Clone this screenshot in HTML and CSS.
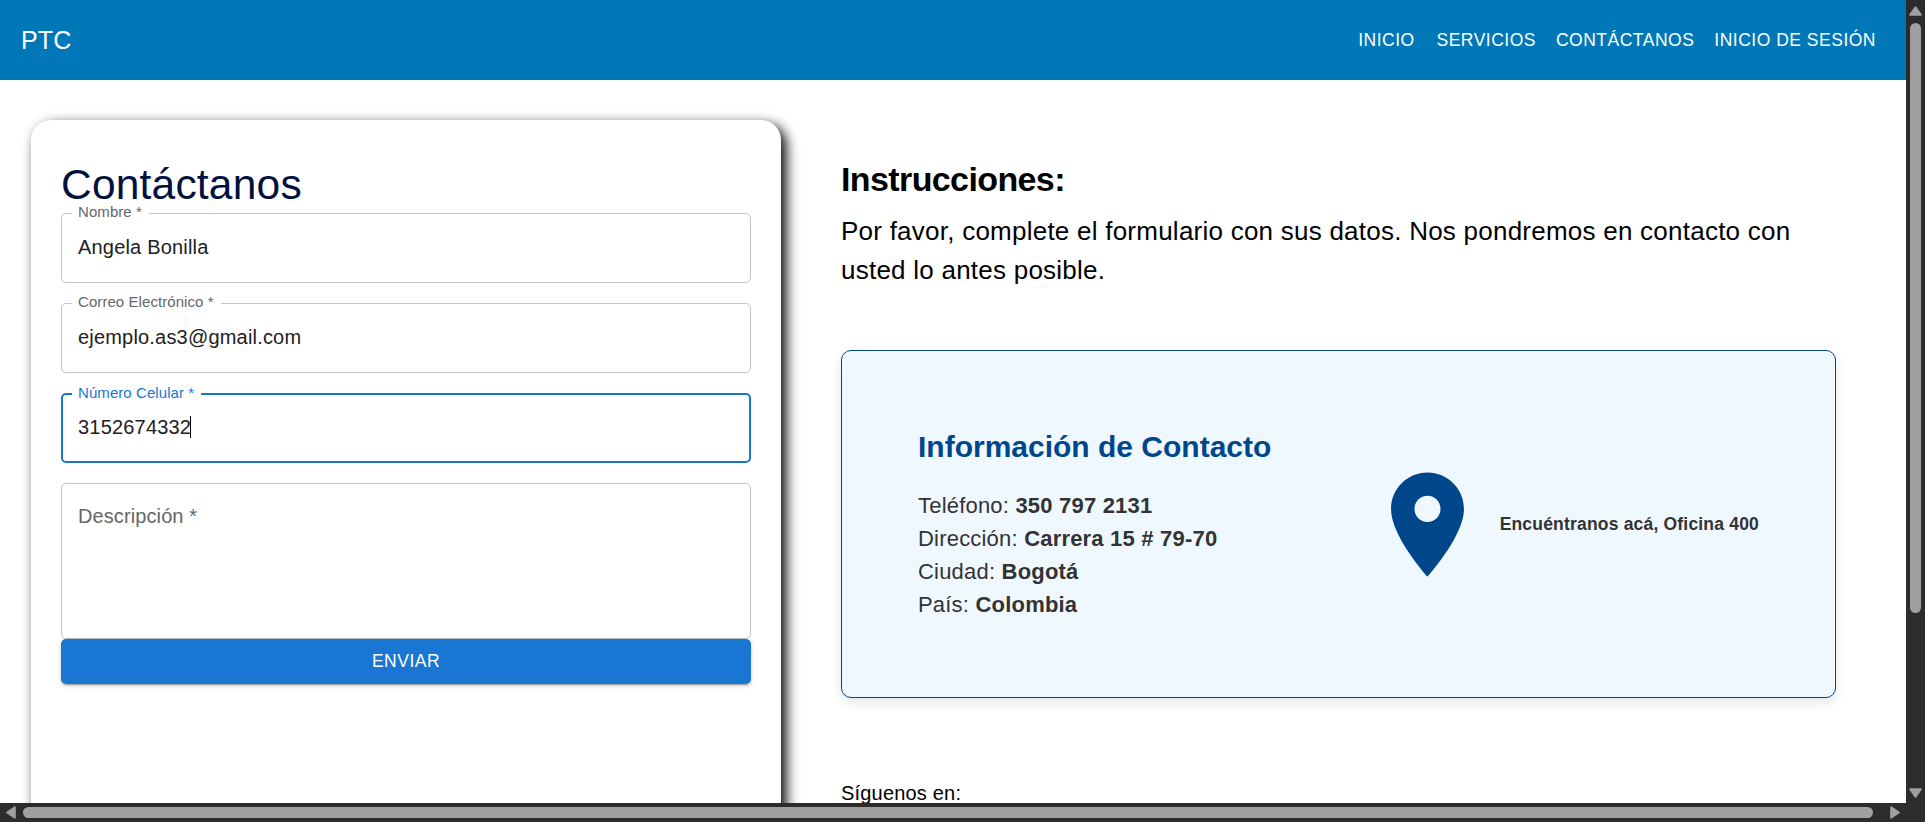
FILE: index.html
```html
<!DOCTYPE html>
<html lang="es">
<head>
<meta charset="utf-8">
<title>PTC - Contáctanos</title>
<link rel="stylesheet" href="styles.css">
</head>
<body>
<div class="window">
  <div class="viewport">
    <header class="appbar">
      <div class="brand">PTC</div>
      <nav class="nav">
        <a class="nav-link">INICIO</a>
        <a class="nav-link">SERVICIOS</a>
        <a class="nav-link">CONTÁCTANOS</a>
        <a class="nav-link">INICIO DE SESIÓN</a>
      </nav>
    </header>
    <main class="content">
      <section class="form-card">
        <h1 class="form-title">Contáctanos</h1>
        <div class="field"><span class="label">Nombre *</span><span class="value">Angela Bonilla</span></div>
        <div class="field"><span class="label">Correo Electrónico *</span><span class="value">ejemplo.as3@gmail.com</span></div>
        <div class="field focused"><span class="label">Número Celular *</span><span class="value">3152674332</span><span class="caret"></span></div>
        <div class="field area"><span class="placeholder">Descripción *</span></div>
        <button class="submit">ENVIAR</button>
      </section>
      <section class="info">
        <h2 class="info-title">Instrucciones:</h2>
        <p class="info-text">Por favor, complete el formulario con sus datos. Nos pondremos en contacto con<br>usted lo antes posible.</p>
        <div class="contact">
          <div class="contact-data">
            <h3 class="contact-title">Información de Contacto</h3>
            <div class="row">Teléfono: <b>350 797 2131</b></div>
            <div class="row">Dirección: <b>Carrera 15 # 79-70</b></div>
            <div class="row">Ciudad: <b>Bogotá</b></div>
            <div class="row">País: <b>Colombia</b></div>
          </div>
          <div class="place">
            <svg class="pin" viewBox="0 0 24 24"><path d="M12 2C8.13 2 5 5.13 5 9c0 5.25 7 13 7 13s7-7.75 7-13c0-3.87-3.13-7-7-7zm0 9.5c-1.38 0-2.5-1.12-2.5-2.5s1.12-2.5 2.5-2.5 2.5 1.12 2.5 2.5-1.12 2.5-2.5 2.5z"/></svg>
            <span class="place-text">Encuéntranos acá, Oficina 400</span>
          </div>
        </div>
        <p class="follow">Síguenos en:</p>
      </section>
    </main>
  </div>
  <div class="vbar">
    <svg class="arrow-v" viewBox="0 0 13 10"><path d="M6.5 1.2L11.8 8.8H1.2z"/></svg>
    <div class="vtrack"><div class="vthumb"></div></div>
    <svg class="arrow-v" viewBox="0 0 13 10"><path d="M6.5 8.8L11.8 1.2H1.2z"/></svg>
  </div>
  <div class="hbar">
    <svg class="arrow-h" viewBox="0 0 10 13"><path d="M1.2 6.5L8.8 1.2v10.6z"/></svg>
    <div class="hthumb"></div>
    <svg class="arrow-h" viewBox="0 0 10 13"><path d="M8.8 6.5L1.2 1.2v10.6z"/></svg>
  </div>
</div>
</body>
</html>
```
FILE: styles.css
```css
* { box-sizing: border-box; }
body { margin: 0; overflow: hidden; background: #fff; font-family: "Liberation Sans", Arial, sans-serif; }
h1, h2, h3, p { margin: 0; }

.window { display: grid; grid-template-columns: 1906px 19px; grid-template-rows: 803px 19px; width: 1925px; height: 822px; }
.viewport { overflow: hidden; background: #fff; }

.appbar { display: flex; align-items: center; justify-content: space-between; height: 80px; padding: 0 20px 0 21px; background: #0078b8; color: #fff; }
.brand { font-size: 25px; letter-spacing: 0.19px; }
.nav { display: flex; }
.nav-link { min-width: 80px; padding: 0 10px; text-align: center; font-size: 17.5px; letter-spacing: 0.5px; white-space: nowrap; }

.content { display: flex; align-items: flex-start; gap: 60px; padding: 40px 0 0 31px; }

.form-card { width: 750px; height: 800px; padding: 40px 30px; border-radius: 20px; background: #fff; box-shadow: 5px 5px 12.5px #000; }
.form-title { height: 53px; line-height: 49px; font-size: 42.5px; font-weight: 400; letter-spacing: 0.2px; color: #001140; }
.field { position: relative; display: flex; align-items: center; height: 70px; margin-bottom: 20px; padding: 0 16px 2px; border: 1px solid #c4c4c4; border-radius: 5px; font-size: 20px; letter-spacing: 0.19px; color: #212121; }
.label { position: absolute; top: -12px; left: 10px; padding: 0 7px 0 6px; background: #fff; font-size: 15px; line-height: 20px; letter-spacing: 0.07px; color: #666; }
.focused { border: 2px solid #1976d2; padding: 0 15px 2px; }
.focused .label { left: 9px; color: #1976d2; }
.caret { width: 1px; height: 22px; margin-left: -1px; background: #000; }
.area { height: 156px; margin-bottom: 0; padding-top: 21px; align-items: flex-start; }
.placeholder { line-height: 23px; letter-spacing: 0.1px; color: #666; }
.submit { position: relative; display: block; width: 100%; height: 45px; padding: 0; border: 0; border-radius: 5px; background: #1976d2; color: #fff; font: 17.5px "Liberation Sans", Arial, sans-serif; letter-spacing: 0.5px; box-shadow: 0 4px 1px -3px rgba(0,0,0,.2), 0 2px 2px rgba(0,0,0,.14), 0 1px 6px rgba(0,0,0,.12); }

.info { width: 995px; padding-top: 38px; color: #000; }
.info-title { line-height: 42px; font-size: 34px; letter-spacing: -0.61px; }
.info-text { padding-top: 12px; font-size: 26px; line-height: 39px; letter-spacing: 0.24px; white-space: nowrap; }
.contact { display: flex; align-items: center; justify-content: space-between; height: 348px; margin-top: 60px; padding: 0 76px 0 76px; border: 1px solid #00468b; border-radius: 10px; background: #f0f8ff; color: #333; box-shadow: 0 5px 12px rgba(0,0,0,.1); }
.contact-data { padding-top: 2px; }
.contact-title { margin-bottom: 24px; line-height: 36px; font-size: 30px; color: #00468b; }
.row { font-size: 22px; line-height: 33px; letter-spacing: 0.2px; white-space: nowrap; }
.place { display: flex; align-items: center; gap: 10px; }
.pin { width: 125px; height: 125px; fill: #00468b; }
.place-text { font-size: 17.5px; font-weight: 700; letter-spacing: 0.19px; white-space: nowrap; }
.follow { margin-top: 84px; font-size: 20px; line-height: 23px; letter-spacing: 0.19px; }

.vbar { grid-row: 1 / 3; grid-column: 2; display: flex; flex-direction: column; align-items: center; padding: 6px 0 24px; background: #2c2c2c; }
.vtrack { flex: 1; padding-top: 7px; }
.vthumb { width: 11px; height: 590px; border-radius: 6px; background: #9f9f9f; }
.hbar { grid-row: 2; grid-column: 1; display: flex; align-items: center; padding: 0 5px 0 6px; background: #2c2c2c; }
.hthumb { width: 1850px; height: 11px; margin: 0 17px 0 7px; border-radius: 6px; background: #9f9f9f; }
.arrow-v, .arrow-h { flex: none; fill: #9f9f9f; stroke: #9f9f9f; stroke-width: 2; stroke-linejoin: round; }
.arrow-v { width: 13px; height: 10px; }
.arrow-h { width: 10px; height: 13px; }
```
